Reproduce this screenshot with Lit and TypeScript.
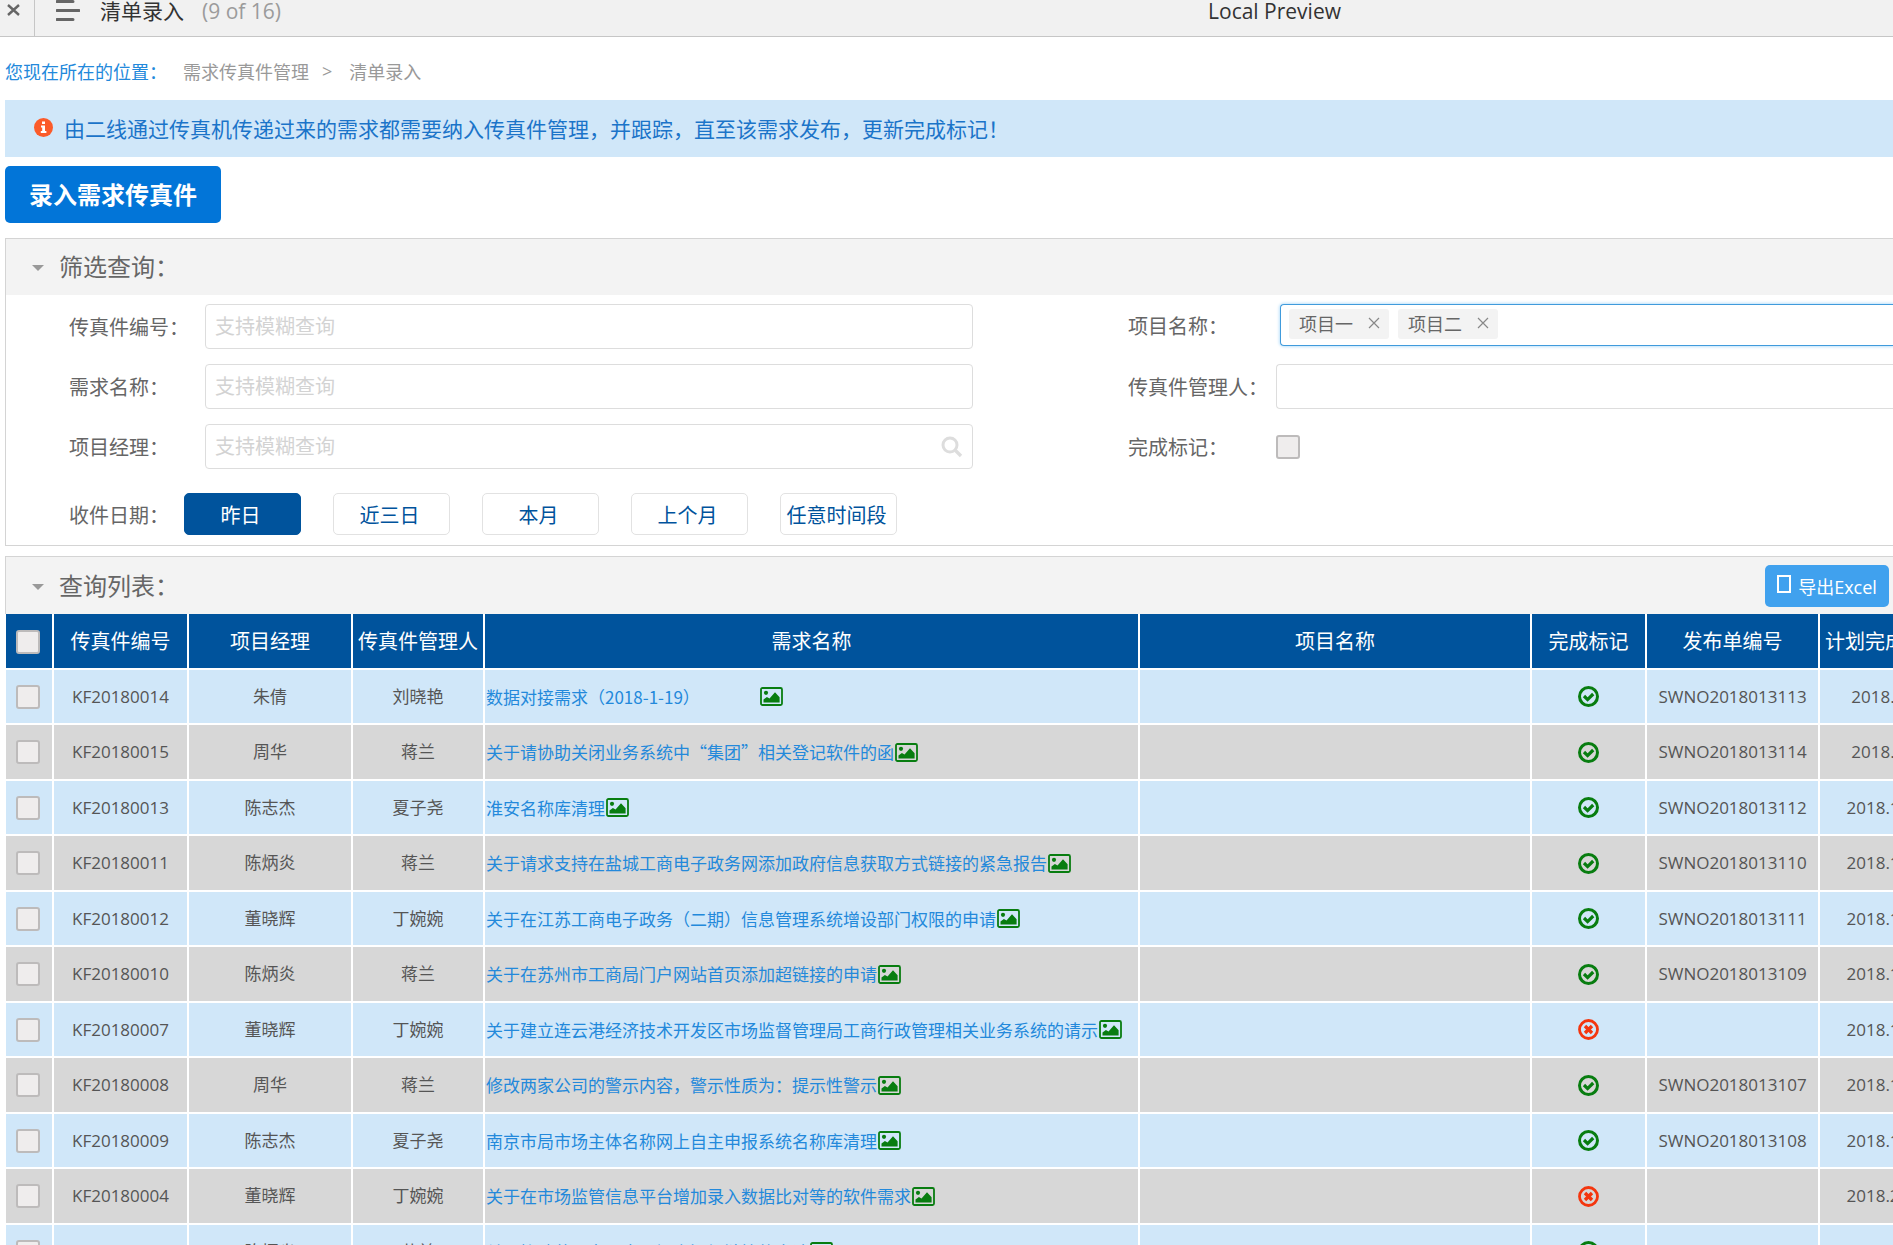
import { LitElement, html, css, svg, nothing } from "lit";
import { customElement, property, state } from "lit/decorators.js";
import { classMap } from "lit/directives/class-map.js";

interface FaxRow {
  code: string;
  manager: string;
  owner: string;
  title: string;
  done: boolean;
  release: string;
  due: string;
}

const ROWS: FaxRow[] = [
  { code: "KF20180014", manager: "朱倩", owner: "刘晓艳", title: "数据对接需求（2018-1-19）\u3000\u3000\u3000\u3000", done: true, release: "SWNO2018013113", due: "2018.1.9" },
  { code: "KF20180015", manager: "周华", owner: "蒋兰", title: "关于请协助关闭业务系统中“集团”相关登记软件的函", done: true, release: "SWNO2018013114", due: "2018.1.9" },
  { code: "KF20180013", manager: "陈志杰", owner: "夏子尧", title: "淮安名称库清理", done: true, release: "SWNO2018013112", due: "2018.1.12" },
  { code: "KF20180011", manager: "陈炳炎", owner: "蒋兰", title: "关于请求支持在盐城工商电子政务网添加政府信息获取方式链接的紧急报告", done: true, release: "SWNO2018013110", due: "2018.1.12" },
  { code: "KF20180012", manager: "董晓辉", owner: "丁婉婉", title: "关于在江苏工商电子政务（二期）信息管理系统增设部门权限的申请", done: true, release: "SWNO2018013111", due: "2018.1.12" },
  { code: "KF20180010", manager: "陈炳炎", owner: "蒋兰", title: "关于在苏州市工商局门户网站首页添加超链接的申请", done: true, release: "SWNO2018013109", due: "2018.1.12" },
  { code: "KF20180007", manager: "董晓辉", owner: "丁婉婉", title: "关于建立连云港经济技术开发区市场监督管理局工商行政管理相关业务系统的请示", done: false, release: "", due: "2018.1.12" },
  { code: "KF20180008", manager: "周华", owner: "蒋兰", title: "修改两家公司的警示内容，警示性质为：提示性警示", done: true, release: "SWNO2018013107", due: "2018.1.12" },
  { code: "KF20180009", manager: "陈志杰", owner: "夏子尧", title: "南京市局市场主体名称网上自主申报系统名称库清理", done: true, release: "SWNO2018013108", due: "2018.1.12" },
  { code: "KF20180004", manager: "董晓辉", owner: "丁婉婉", title: "关于在市场监管信息平台增加录入数据比对等的软件需求", done: false, release: "", due: "2018.2.12" },
  { code: "KF20180003", manager: "陈炳炎", owner: "蒋兰", title: "关于协助苏州市工商局门户添加链接的申请", done: true, release: "SWNO2018013106", due: "2018.2.12" },
];

const COLUMNS = [
  { label: "传真件编号", cls: "c-code" },
  { label: "项目经理", cls: "c-manager" },
  { label: "传真件管理人", cls: "c-owner" },
  { label: "需求名称", cls: "c-title" },
  { label: "项目名称", cls: "c-project" },
  { label: "完成标记", cls: "c-done" },
  { label: "发布单编号", cls: "c-release" },
  { label: "计划完成时间", cls: "c-due" },
];

const RANGES = ["昨日", "近三日", "本月", "上个月", "任意时间段"];

const shared = css`
  *,
  *::before,
  *::after {
    box-sizing: border-box;
  }
  button,
  input {
    font: inherit;
    margin: 0;
  }
  button {
    cursor: pointer;
    padding: 0;
  }
  svg {
    display: block;
    flex: none;
  }
  .tick {
    appearance: none;
    display: block;
    width: 24px;
    height: 24px;
    border: 2px solid #bdbbbb;
    border-radius: 3px;
    background: #efeded;
  }
  .tick:checked {
    background: #0275d8;
  }
`;

@customElement("viewer-bar")
class ViewerBar extends LitElement {
  static styles = [
    shared,
    css`
      :host {
        box-sizing: border-box;
        display: grid;
        grid-template-columns: 35px 17fr auto 8fr;
        align-items: start;
        height: 37px;
        background: #f1f1f1;
        border-bottom: 1px solid #c6c6c6;
        color: #333;
        font-size: 21px;
        line-height: 22px;
      }
      .close,
      .menu {
        display: flex;
        border: 0;
        background: none;
      }
      .close {
        height: 36px;
        padding: 4px 0 0 7px;
        border-right: 1px solid #c6c6c6;
      }
      .left {
        display: flex;
        gap: 18px;
        padding-left: 21px;
      }
      .menu {
        margin-right: 2px;
      }
      .count {
        color: #9b9b9b;
      }
    `,
  ];
  render() {
    return html`
      <button class="close" aria-label="关闭">
        <svg width="13" height="12" viewBox="0 0 13 12"><path d="M1 1l11 10M12 1L1 11" stroke="#666" stroke-width="2.4" /></svg>
      </button>
      <div class="left">
        <button class="menu" aria-label="菜单">
          <svg width="24" height="22" viewBox="0 0 24 22"><path d="M1 1.5h16M1 10.5h22M1 19.5h16" stroke="#666" stroke-width="3" stroke-linecap="round" /></svg>
        </button>
        <span>清单录入</span>
        <span class="count">(9 of 16)</span>
      </div>
      <span>Local Preview</span>
    `;
  }
}

@customElement("section-head")
class SectionHead extends LitElement {
  @property() label = "";
  static styles = [
    shared,
    css`
      :host {
        box-sizing: border-box;
        display: flex;
        align-items: center;
        justify-content: space-between;
        height: 56px;
        padding: 0 4px 0 26px;
        background: #f3f3f3;
        color: #666;
      }
      .toggle {
        display: flex;
        align-items: center;
        gap: 15px;
        border: 0;
        background: none;
        color: inherit;
        font-size: 24px;
        line-height: 32px;
      }
    `,
  ];
  render() {
    return html`
      <button class="toggle">
        <svg width="12" height="8" viewBox="0 0 12 8"><path d="M0 2h12L6 8z" fill="#999" /></svg>
        <span>${this.label}</span>
      </button>
      <slot></slot>
    `;
  }
}

@customElement("filter-form")
class FilterForm extends LitElement {
  @state() private tags = ["项目一", "项目二"];
  @state() private range = 0;

  static styles = [
    shared,
    css`
      :host {
        display: block;
        padding: 9px 0 10px 63px;
        color: #666;
        font-size: 20px;
      }
      .fields {
        display: grid;
        grid-template-columns: minmax(0, 904fr) minmax(0, 765fr);
        grid-auto-rows: 45px;
        gap: 15px 155px;
      }
      .field {
        display: flex;
        align-items: center;
      }
      .short {
        height: 42px;
      }
      .name {
        flex: none;
        width: 136px;
      }
      .right .name {
        width: 148px;
      }
      .box {
        display: flex;
        align-items: center;
        flex: 1;
        min-width: 0;
        height: 45px;
        padding: 0 9px;
        border: 1px solid #ddd;
        border-radius: 4px;
        background: #fff;
      }
      .right .box {
        border-right: 0;
        border-radius: 4px 0 0 4px;
      }
      .text {
        flex: 1;
        min-width: 0;
        height: 100%;
        padding: 0;
        border: 0;
        outline: 0;
        background: none;
        color: inherit;
      }
      .text::placeholder {
        color: #d3d3d3;
        opacity: 1;
      }
      .right .multi {
        height: 42px;
        margin-left: 4px;
        padding: 0 8px 2px;
        gap: 9px;
        border-color: #409bdc;
        box-shadow: 0 0 3px 1px #bfe2fb;
      }
      .tag {
        display: flex;
        align-items: center;
        gap: 15px;
        height: 30px;
        padding: 0 9px 2px 10px;
        border-radius: 3px;
        background: #f3f3f3;
        font-size: 18px;
      }
      .remove {
        border: 0;
        background: none;
      }
      .dates {
        display: flex;
        align-items: center;
        margin-top: 24px;
      }
      .dates .name {
        width: 115px;
      }
      .ranges {
        display: flex;
        flex-wrap: wrap;
        gap: 32px;
      }
      .range {
        width: 117px;
        height: 42px;
        padding-right: 4px;
        border: 1px solid #e2e2e2;
        border-radius: 5px;
        background: #fff;
        color: #00539c;
      }
      .range.on {
        border-color: #00539c;
        background: #00539c;
        color: #fff;
      }
    `,
  ];

  private textField(id: string, label: string, search = false) {
    return html`<div class="field">
      <label class="name" for=${id}>${label}</label>
      <div class="box">
        <input class="text" id=${id} type="text" placeholder="支持模糊查询" />
        ${search
          ? svg`<svg width="22" height="22" viewBox="0 0 22 22"><circle cx="9" cy="9" r="7" fill="none" stroke="#ddd" stroke-width="3" /><path d="M14 14l6 6" stroke="#ddd" stroke-width="3.4" /></svg>`
          : nothing}
      </div>
    </div>`;
  }

  render() {
    return html`
      <div class="fields">
        ${this.textField("code", "传真件编号：")}
        <div class="field right short">
          <label class="name" for="project">项目名称：</label>
          <div class="box multi">
            ${this.tags.map(
              (t) => html`<span class="tag"
                >${t}<button class="remove" aria-label="移除${t}" @click=${() => (this.tags = this.tags.filter((x) => x !== t))}>
                  <svg width="12" height="12" viewBox="0 0 12 12"><path d="M1 1l10 10M11 1L1 11" stroke="#888" stroke-width="1.2" /></svg></button
              ></span>`
            )}
            <input class="text" id="project" type="text" />
          </div>
        </div>
        ${this.textField("title", "需求名称：")}
        <div class="field right">
          <label class="name" for="owner">传真件管理人：</label>
          <div class="box"><input class="text" id="owner" type="text" /></div>
        </div>
        ${this.textField("manager", "项目经理：", true)}
        <div class="field right">
          <label class="name" for="done">完成标记：</label>
          <input class="tick" id="done" type="checkbox" />
        </div>
      </div>
      <div class="dates" role="group" aria-labelledby="dates-name">
        <span class="name" id="dates-name">收件日期：</span>
        <div class="ranges">
          ${RANGES.map(
            (r, i) => html`<button
              class=${classMap({ range: true, on: i === this.range })}
              aria-pressed=${i === this.range ? "true" : "false"}
              @click=${() => (this.range = i)}
            >
              ${r}
            </button>`
          )}
        </div>
      </div>
    `;
  }
}

@customElement("fax-table")
class FaxTable extends LitElement {
  static styles = [
    shared,
    css`
      :host {
        display: block;
        overflow-x: auto;
        scrollbar-width: none;
        padding-left: 1px;
      }
      table {
        width: 100%;
        min-width: 1946px;
        table-layout: fixed;
        border-collapse: separate;
        border-spacing: 0;
        color: #555;
        font-size: 17px;
        line-height: 24px;
        text-align: center;
      }
      .c-code { width: 135px; }
      .c-manager { width: 164px; }
      .c-owner { width: 132px; }
      .c-title { width: 655px; }
      .c-done { width: 115px; }
      .c-release { width: 173px; }
      .c-due { width: 132px; }
      th,
      td {
        height: 55px;
        padding: 0;
        border: solid #fff;
        border-width: 0 2px 2px 0;
        background: #d0e7f9;
        white-space: nowrap;
      }
      tbody tr:nth-child(even) td {
        height: 56px;
        background: #d7d7d7;
      }
      th {
        height: 56px;
        padding-top: 2px;
        background: #00539c;
        color: #fff;
        font-size: 20px;
        font-weight: 400;
      }
      .c-check {
        width: 48px;
        padding-right: 2px;
      }
      td svg,
      .tick {
        margin: 0 auto;
      }
      .name {
        display: flex;
        align-items: center;
        gap: 1px;
        padding-left: 1px;
      }
      .name svg {
        margin: 0;
      }
      .link {
        color: #2389db;
        font-family: "Noto Sans CJK SC", sans-serif;
        text-decoration: none;
        white-space: pre;
      }
    `,
  ];

  private mark(done: boolean) {
    return done
      ? html`<svg width="21" height="21" viewBox="0 0 21 21" role="img" aria-label="已完成">
          <circle cx="10.5" cy="10.5" r="9" fill="none" stroke="#087d10" stroke-width="3" />
          <path d="M6 10l3.6 3.6 5.6-5.6" fill="none" stroke="#087d10" stroke-width="3.2" />
        </svg>`
      : html`<svg width="21" height="21" viewBox="0 0 21 21" role="img" aria-label="未完成">
          <circle cx="10.5" cy="10.5" r="9" fill="none" stroke="#f4360e" stroke-width="2.8" />
          <path d="M7 7l7 7M14 7l-7 7" stroke="#f4360e" stroke-width="3.4" />
        </svg>`;
  }

  render() {
    return html`
      <table>
        <thead>
          <tr>
            <th class="c-check"><input class="tick" type="checkbox" aria-label="全选" /></th>
            ${COLUMNS.map((c) => html`<th class=${c.cls} scope="col">${c.label}</th>`)}
          </tr>
        </thead>
        <tbody>
          ${ROWS.map(
            (r) => html`<tr>
              <td class="c-check"><input class="tick" type="checkbox" aria-label="选择${r.code}" /></td>
              <td>${r.code}</td>
              <td>${r.manager}</td>
              <td>${r.owner}</td>
              <td>
                <div class="name">
                  <a class="link" href="#${r.code}">${r.title}</a>
                  <svg width="23" height="19" viewBox="0 0 23 19">
                    <rect x="1" y="1" width="21" height="17" rx="1.5" fill="none" stroke="#087d10" stroke-width="1.8" />
                    <circle cx="6" cy="5.8" r="2.1" fill="#087d10" />
                    <path d="M3.5 15.5v-3l3.4-2.6 2.6 1.6L15 5.2l4.6 5v5.3z" fill="#087d10" />
                  </svg>
                </div>
              </td>
              <td></td>
              <td>${this.mark(r.done)}</td>
              <td>${r.release}</td>
              <td>${r.due}</td>
            </tr>`
          )}
        </tbody>
      </table>
    `;
  }
}

@customElement("app-root")
class AppRoot extends LitElement {
  static styles = [
    shared,
    css`
      :host {
        display: block;
        height: 100vh;
        overflow: hidden;
        background: #fff;
        font-family: "Open Sans", "Noto Sans CJK SC", sans-serif;
      }
      main {
        padding-left: 5px;
      }
      .crumbs {
        display: flex;
        align-items: center;
        height: 63px;
        padding-top: 4px;
        color: #999;
        font-size: 18px;
      }
      .here {
        margin-right: 16px;
        color: #2389db;
      }
      .crumb {
        color: inherit;
        text-decoration: none;
      }
      .sep {
        margin: 0 17px 0 13px;
      }
      .notice {
        display: flex;
        align-items: center;
        gap: 11px;
        height: 57px;
        padding: 0 0 2px 29px;
        background: #d0e7f9;
        color: #1b74c9;
        font-size: 21px;
      }
      .create {
        display: block;
        width: 216px;
        height: 57px;
        margin: 9px 0 15px;
        padding-bottom: 2px;
        border: 0;
        border-radius: 5px;
        background: #0275d8;
        color: #fff;
        font-size: 24px;
        font-weight: 700;
      }
      .panel {
        border: solid #d4d4d4;
        border-width: 1px 0 1px 1px;
      }
      .results {
        margin-top: 10px;
      }
      .results-head {
        height: 58px;
        border: solid #d4d4d4;
        border-width: 1px 0 0 1px;
      }
      .export {
        display: flex;
        align-items: center;
        justify-content: center;
        gap: 7px;
        width: 124px;
        height: 42px;
        border: 0;
        border-radius: 5px;
        background: #40a1ee;
        color: #fff;
        font-size: 18px;
      }
      .file {
        width: 14px;
        height: 18px;
        margin-bottom: 3px;
        border: 2px solid #fff;
      }
    `,
  ];
  render() {
    return html`
      <viewer-bar></viewer-bar>
      <main>
        <nav class="crumbs" aria-label="您现在所在的位置">
          <span class="here">您现在所在的位置：</span>
          <a class="crumb" href="#fax">需求传真件管理</a>
          <span class="sep">&gt;</span>
          <a class="crumb" href="#entry">清单录入</a>
        </nav>
        <div class="notice">
          <svg width="19" height="19" viewBox="0 0 19 19">
            <circle cx="9.5" cy="9.5" r="9.5" fill="#fb5b2a" />
            <path d="M8 3.5h3v2.6H8zM7 7.5h4v5.6h1.4v2H6.8v-2h1.4V9.4H7z" fill="#fff" />
          </svg>
          <span>由二线通过传真机传递过来的需求都需要纳入传真件管理，并跟踪，直至该需求发布，更新完成标记！</span>
        </div>
        <button class="create">录入需求传真件</button>
        <section class="panel">
          <section-head label="筛选查询："></section-head>
          <filter-form></filter-form>
        </section>
        <section class="results">
          <section-head class="results-head" label="查询列表：">
            <button class="export"><span class="file"></span>导出Excel</button>
          </section-head>
          <fax-table></fax-table>
        </section>
      </main>
    `;
  }
}
